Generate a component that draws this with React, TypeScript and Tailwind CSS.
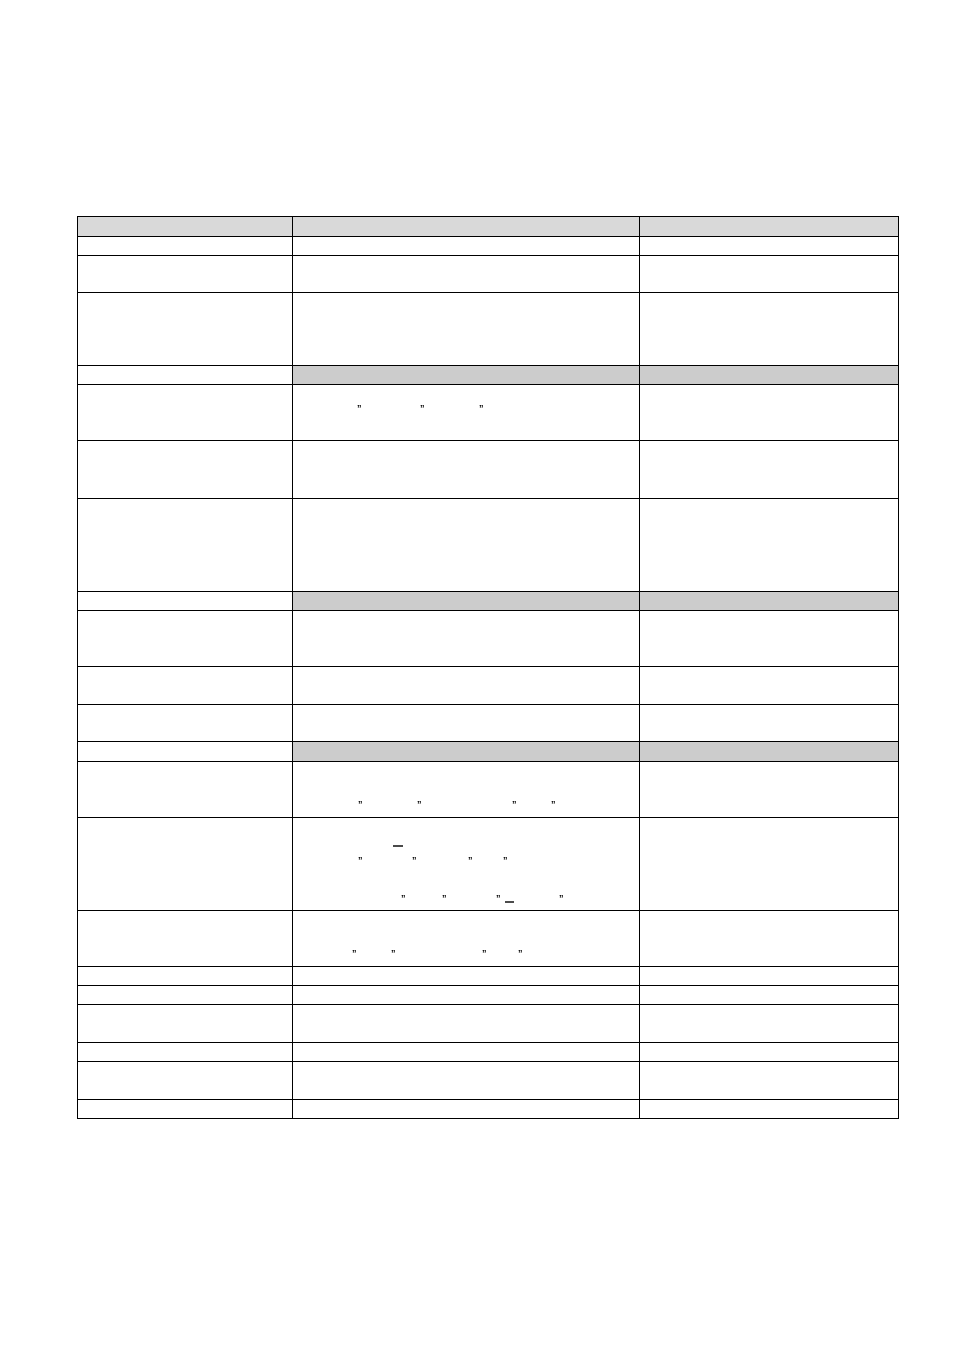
import React from "react";

type Kind = "head" | "sec" | "plain";

const rows: { h: string; kind: Kind; key: string }[] = [
  { h: "h-[19px]", kind: "head", key: "r0" },
  { h: "h-[18px]", kind: "plain", key: "r1" },
  { h: "h-[36px]", kind: "plain", key: "r2" },
  { h: "h-[72px]", kind: "plain", key: "r3" },
  { h: "h-[18px]", kind: "sec", key: "r4" },
  { h: "h-[55px]", kind: "plain", key: "r5" },
  { h: "h-[57px]", kind: "plain", key: "r6" },
  { h: "h-[92px]", kind: "plain", key: "r7" },
  { h: "h-[18px]", kind: "sec", key: "r8" },
  { h: "h-[55px]", kind: "plain", key: "r9" },
  { h: "h-[37px]", kind: "plain", key: "r10" },
  { h: "h-[36px]", kind: "plain", key: "r11" },
  { h: "h-[19px]", kind: "sec", key: "r12" },
  { h: "h-[55px]", kind: "plain", key: "r13" },
  { h: "h-[92px]", kind: "plain", key: "r14" },
  { h: "h-[55px]", kind: "plain", key: "r15" },
  { h: "h-[18px]", kind: "plain", key: "r16" },
  { h: "h-[18px]", kind: "plain", key: "r17" },
  { h: "h-[37px]", kind: "plain", key: "r18" },
  { h: "h-[18px]", kind: "plain", key: "r19" },
  { h: "h-[37px]", kind: "plain", key: "r20" },
  { h: "h-[18px]", kind: "plain", key: "r21" },
];

const Q = ({ w }: { w?: string }) => (
  <span className={`shrink-0 ${w ?? ""}`}>{"\u201D"}</span>
);

const line =
  "flex h-[9px] leading-[9px] text-[9px] font-bold text-black antialiased opacity-[0.99] [will-change:transform] [font-family:'Liberation_Sans',Arial,sans-serif]";

function MidContent({ k }: { k: string }) {
  if (k === "r5")
    return (
      <div className={`${line} mt-[19px] pl-[64px]`}>
        <Q w="w-[63px]" />
        <Q w="w-[59px]" />
        <Q />
      </div>
    );
  if (k === "r13")
    return (
      <div className={`${line} mt-[38px] pl-[65px]`}>
        <Q w="w-[59px]" />
        <Q w="w-[95px]" />
        <Q w="w-[39px]" />
        <Q />
      </div>
    );
  if (k === "r14")
    return (
      <div className="flex flex-col">
        <div className="mt-[27px] pl-[100px] flex">
          <span className="block h-[2px] w-[10px] bg-[#4a4a4a]" />
        </div>
        <div className={`${line} mt-[9px] pl-[65px]`}>
          <Q w="w-[54px]" />
          <Q w="w-[56px]" />
          <Q w="w-[35px]" />
          <Q />
        </div>
        <div className={`${line} mt-[29px] pl-[108px] items-start`}>
          <Q w="w-[41px]" />
          <Q w="w-[54px]" />
          <Q w="w-[9px]" />
          <span className="w-[54px] shrink-0">
            <span className="block mt-[7px] h-[2px] w-[9px] bg-[#4a4a4a]" />
          </span>
          <Q />
        </div>
      </div>
    );
  if (k === "r15")
    return (
      <div className={`${line} mt-[38px] pl-[59px]`}>
        <Q w="w-[39px]" />
        <Q w="w-[91px]" />
        <Q w="w-[36px]" />
        <Q />
      </div>
    );
  return null;
}

export default function App() {
  return (
    <div className="min-h-[1350px] w-full bg-white pt-[216px] pl-[77px]">
      <div className="grid w-[822px] grid-cols-[214px_346px_258px] gap-px bg-black p-px">
        {rows.map((r) => {
          const c1 = r.kind === "head" ? "bg-[#d9d9d9]" : "bg-white";
          const c23 =
            r.kind === "head"
              ? "bg-[#d9d9d9]"
              : r.kind === "sec"
              ? "bg-[#cccccc]"
              : "bg-white";
          return (
            <React.Fragment key={r.key}>
              <div className={`${r.h} ${c1}`} />
              <div className={`${r.h} ${c23} overflow-hidden`}>
                <MidContent k={r.key} />
              </div>
              <div className={`${r.h} ${c23}`} />
            </React.Fragment>
          );
        })}
      </div>
    </div>
  );
}
